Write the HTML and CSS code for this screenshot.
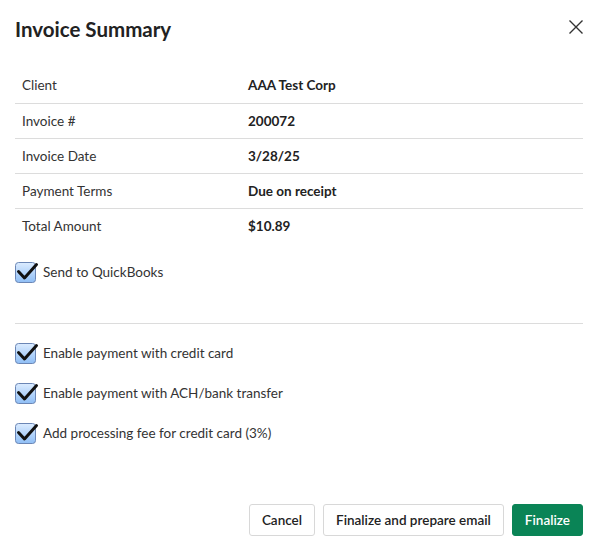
FILE: index.html
```html
<!DOCTYPE html>
<html lang="en">
<head>
    <meta charset="UTF-8">
    <meta name="viewport" content="width=device-width, initial-scale=1.0">
    <title>Invoice Summary</title>
    <link rel="stylesheet" href="styles.css">
</head>
<body>
    <div class="invoice-modal">
        <div class="invoice-modal-header">
            <h2 class="invoice-modal-title">Invoice Summary</h2>
            <button class="invoice-modal-close" aria-label="Close">
                <svg width="16" height="16" viewBox="0 0 16 16">
                    <path d="M1.5 1.5 L14.5 14.5 M14.5 1.5 L1.5 14.5" stroke="#333" stroke-width="1.4" fill="none"/>
                </svg>
            </button>
        </div>

        <table class="invoice-summary-table">
            <tr><td class="invoice-summary-label">Client</td><td class="invoice-summary-value">AAA Test Corp</td></tr>
            <tr><td class="invoice-summary-label">Invoice #</td><td class="invoice-summary-value">200072</td></tr>
            <tr><td class="invoice-summary-label">Invoice Date</td><td class="invoice-summary-value">3/28/25</td></tr>
            <tr><td class="invoice-summary-label">Payment Terms</td><td class="invoice-summary-value">Due on receipt</td></tr>
            <tr><td class="invoice-summary-label">Total Amount</td><td class="invoice-summary-value">$10.89</td></tr>
        </table>

        <div class="invoice-option invoice-option-qb">
            <span class="invoice-check">
                <svg width="26" height="24" viewBox="0 0 26 24">
                    <defs>
                        <linearGradient id="boxfill" x1="0" y1="0" x2="0" y2="1">
                            <stop offset="0" stop-color="#dcecff"/>
                            <stop offset="1" stop-color="#8fbef5"/>
                        </linearGradient>
                    </defs>
                    <rect x="0.5" y="2.5" width="20" height="20" rx="3" fill="url(#boxfill)" stroke="#6b86b5"/>
                    <path d="M3.5 11.5 L9.5 18 L21.5 4.5" stroke="#111" stroke-width="3" fill="none" stroke-linecap="round" stroke-linejoin="round"/>
                </svg>
            </span>
            <span class="invoice-option-text">Send to QuickBooks</span>
        </div>

        <hr class="invoice-divider">

        <div class="invoice-option">
            <span class="invoice-check">
                <svg width="26" height="24" viewBox="0 0 26 24">
                    <rect x="0.5" y="2.5" width="20" height="20" rx="3" fill="url(#boxfill)" stroke="#6b86b5"/>
                    <path d="M3.5 11.5 L9.5 18 L21.5 4.5" stroke="#111" stroke-width="3" fill="none" stroke-linecap="round" stroke-linejoin="round"/>
                </svg>
            </span>
            <span class="invoice-option-text">Enable payment with credit card</span>
        </div>
        <div class="invoice-option">
            <span class="invoice-check">
                <svg width="26" height="24" viewBox="0 0 26 24">
                    <rect x="0.5" y="2.5" width="20" height="20" rx="3" fill="url(#boxfill)" stroke="#6b86b5"/>
                    <path d="M3.5 11.5 L9.5 18 L21.5 4.5" stroke="#111" stroke-width="3" fill="none" stroke-linecap="round" stroke-linejoin="round"/>
                </svg>
            </span>
            <span class="invoice-option-text">Enable payment with ACH/bank transfer</span>
        </div>
        <div class="invoice-option">
            <span class="invoice-check">
                <svg width="26" height="24" viewBox="0 0 26 24">
                    <rect x="0.5" y="2.5" width="20" height="20" rx="3" fill="url(#boxfill)" stroke="#6b86b5"/>
                    <path d="M3.5 11.5 L9.5 18 L21.5 4.5" stroke="#111" stroke-width="3" fill="none" stroke-linecap="round" stroke-linejoin="round"/>
                </svg>
            </span>
            <span class="invoice-option-text">Add processing fee for credit card (3%)</span>
        </div>

        <div class="invoice-modal-buttons">
            <button class="invoice-button">Cancel</button>
            <button class="invoice-button">Finalize and prepare email</button>
            <button class="invoice-button invoice-button-primary">Finalize</button>
        </div>
    </div>
</body>
</html>
```

FILE: styles.css
```css
body {
    font-family: 'Lato', 'Liberation Sans', sans-serif;
    background-color: #fff;
    color: #222;
    margin: 0;
}

.invoice-modal {
    width: 568px;
    padding: 0 15px;
}

.invoice-modal-header {
    display: flex;
    justify-content: space-between;
    align-items: center;
    height: 58px;
}

.invoice-modal-title {
    margin: 0;
    font-size: 20.5px;
    font-weight: bold;
    color: #222;
}

.invoice-modal-close {
    background: none;
    border: none;
    padding: 0;
    margin-right: -1px;
    margin-top: -4px;
    cursor: pointer;
    display: flex;
}

.invoice-summary-table {
    width: 100%;
    border-collapse: collapse;
    margin-top: 10px;
    font-size: 13.5px;
}

.invoice-summary-table tr {
    height: 35px;
    border-bottom: 1px solid #dcdcdc;
}

.invoice-summary-table tr:last-child {
    border-bottom: none;
}

.invoice-summary-table td {
    padding: 0;
}

.invoice-summary-label {
    width: 226px;
    padding-left: 7px !important;
    color: #333;
}

.invoice-summary-value {
    font-weight: bold;
    color: #222;
}

.invoice-option {
    display: flex;
    align-items: center;
    height: 40px;
    font-size: 13.5px;
    color: #333;
}

.invoice-option-qb {
    margin-top: 9px;
}

.invoice-check {
    display: flex;
    width: 28px;
    margin-top: -1px;
}

.invoice-divider {
    border: none;
    border-top: 1px solid #dcdcdc;
    margin: 31px 0 9px 0;
}

.invoice-modal-buttons {
    display: flex;
    justify-content: flex-end;
    gap: 8px;
    margin-top: 51px;
}

.invoice-button {
    font-family: inherit;
    font-size: 13.5px;
    font-weight: 600;
    color: #222;
    background-color: #fff;
    border: 1px solid #d8d8d8;
    border-radius: 3px;
    height: 32px;
    padding: 0 12px;
    cursor: pointer;
}

.invoice-button-primary {
    background-color: #0a8456;
    border-color: #0a8456;
    color: #fff;
}
```
